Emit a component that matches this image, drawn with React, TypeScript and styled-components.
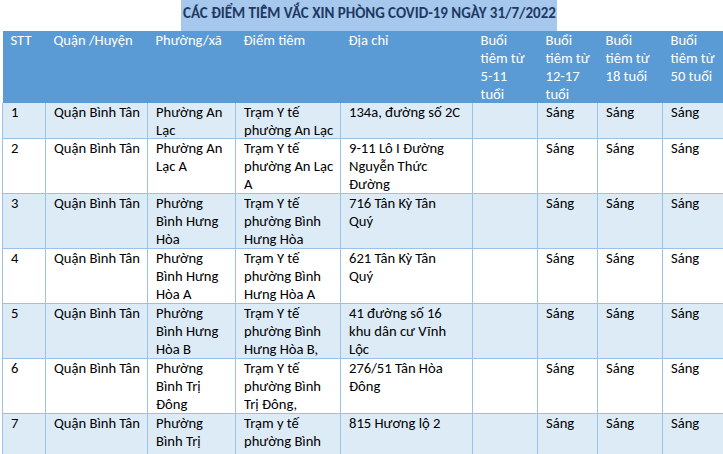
import React from 'react';
import styled, { createGlobalStyle } from 'styled-components';

type Row = {
  stt: string;
  district: string;
  ward: string[];
  site: string[];
  address: string[];
  s5: string;
  s12: string;
  s18: string;
  s50: string;
  height: number;
};

const rows: Row[] = [
  {
    stt: '1',
    district: 'Quận Bình Tân',
    ward: ['Phường An', 'Lạc'],
    site: ['Trạm Y tế', 'phường An Lạc'],
    address: ['134a, đường số 2C'],
    s5: '',
    s12: 'Sáng',
    s18: 'Sáng',
    s50: 'Sáng',
    height: 36,
  },
  {
    stt: '2',
    district: 'Quận Bình Tân',
    ward: ['Phường An', 'Lạc A'],
    site: ['Trạm Y tế', 'phường An Lạc', 'A'],
    address: ['9-11 Lô I Đường', 'Nguyễn Thức', 'Đường'],
    s5: '',
    s12: 'Sáng',
    s18: 'Sáng',
    s50: 'Sáng',
    height: 55,
  },
  {
    stt: '3',
    district: 'Quận Bình Tân',
    ward: ['Phường', 'Bình Hưng', 'Hòa'],
    site: ['Trạm Y tế', 'phường Bình', 'Hưng Hòa'],
    address: ['716 Tân Kỳ Tân', 'Quý'],
    s5: '',
    s12: 'Sáng',
    s18: 'Sáng',
    s50: 'Sáng',
    height: 55,
  },
  {
    stt: '4',
    district: 'Quận Bình Tân',
    ward: ['Phường', 'Bình Hưng', 'Hòa A'],
    site: ['Trạm Y tế', 'phường Bình', 'Hưng Hòa A'],
    address: ['621 Tân Kỳ Tân', 'Quý'],
    s5: '',
    s12: 'Sáng',
    s18: 'Sáng',
    s50: 'Sáng',
    height: 55,
  },
  {
    stt: '5',
    district: 'Quận Bình Tân',
    ward: ['Phường', 'Bình Hưng', 'Hòa B'],
    site: ['Trạm Y tế', 'phường Bình', 'Hưng Hòa B,'],
    address: ['41 đường số 16', 'khu dân cư Vĩnh', 'Lộc'],
    s5: '',
    s12: 'Sáng',
    s18: 'Sáng',
    s50: 'Sáng',
    height: 55,
  },
  {
    stt: '6',
    district: 'Quận Bình Tân',
    ward: ['Phường', 'Bình Trị', 'Đông'],
    site: ['Trạm Y tế', 'phường Bình', 'Trị Đông,'],
    address: ['276/51 Tân Hòa', 'Đông'],
    s5: '',
    s12: 'Sáng',
    s18: 'Sáng',
    s50: 'Sáng',
    height: 55,
  },
  {
    stt: '7',
    district: 'Quận Bình Tân',
    ward: ['Phường', 'Bình Trị', 'Đông A'],
    site: ['Trạm y tế', 'phường Bình', 'Trị Đông A'],
    address: ['815 Hương lộ 2'],
    s5: '',
    s12: 'Sáng',
    s18: 'Sáng',
    s50: 'Sáng',
    height: 55,
  },
];

const headers: string[][] = [
  ['STT'],
  ['Quận /Huyện'],
  ['Phường/xã'],
  ['Điểm tiêm'],
  ['Địa chỉ'],
  ['Buổi', 'tiêm từ', '5-11', 'tuổi'],
  ['Buổi', 'tiêm từ', '12-17', 'tuổi'],
  ['Buổi', 'tiêm  từ', '18 tuổi'],
  ['Buổi', 'tiêm từ', '50 tuổi'],
];

const widths = [43, 102, 88, 105, 132, 65, 60, 65, 65];

function Lines({ lines }: { lines: string[] }) {
  return (
    <>
      {lines.map((line, i) => (
        <Line key={i}>{line}</Line>
      ))}
    </>
  );
}

export default function App(): JSX.Element {
  return (
    <Page>
      <GlobalStyle />
      <TitleBar>CÁC ĐIỂM TIÊM VẮC XIN PHÒNG COVID-19 NGÀY 31/7/2022</TitleBar>
      <Sheet>
        <colgroup>
          {widths.map((w, i) => (
            <col key={i} style={{ width: w }} />
          ))}
        </colgroup>
        <thead>
          <tr>
            {headers.map((h, i) => (
              <HeadCell key={i}>
                <Lines lines={h} />
              </HeadCell>
            ))}
          </tr>
        </thead>
        <tbody>
          {rows.map((r, i) => {
            const cells: string[][] = [
              [r.stt],
              [r.district],
              r.ward,
              r.site,
              r.address,
              [r.s5],
              [r.s12],
              [r.s18],
              [r.s50],
            ];
            return (
              <BodyRow key={r.stt} striped={i % 2 === 0}>
                {cells.map((c, j) => (
                  <Cell key={j}>
                    <CellBody style={{ height: r.height - 1 }}>
                      <Lines lines={c} />
                    </CellBody>
                  </Cell>
                ))}
              </BodyRow>
            );
          })}
        </tbody>
      </Sheet>
    </Page>
  );
}

const GlobalStyle = createGlobalStyle`
  html, body {
    margin: 0;
    padding: 0;
    background: #ffffff;
    overflow: hidden;
  }
  body {
    font-family: Carlito, Lato, "Noto Sans", sans-serif;
    font-size: 14.6px;
    color: #000000;
  }
`;

const Page = styled.div`
  width: 723px;
  height: 454px;
  overflow: hidden;
  padding-left: 2px;
  box-sizing: border-box;
`;

const TitleBar = styled.div`
  margin-left: 179px;
  width: 376px;
  height: 31px;
  box-sizing: border-box;
  padding: 4px 0 0 2px;
  background: #a6c8ec;
  color: #1f3864;
  font-weight: 700;
  font-size: 15px;
  line-height: 18px;
  white-space: nowrap;
`;

const Sheet = styled.table`
  table-layout: fixed;
  width: 725px;
  border-collapse: collapse;
`;

const Line = styled.div`
  white-space: nowrap;
`;

const HeadCell = styled.th`
  background: #5b9bd5;
  color: #ffffff;
  font-weight: 400;
  text-align: left;
  vertical-align: top;
  padding: 0 0 0 8px;
  height: 72px;
  line-height: 18px;
  border: 0;
  box-sizing: border-box;
`;

const BodyRow = styled.tr<{ striped: boolean }>`
  background: ${(p) => (p.striped ? '#ddebf7' : '#ffffff')};
`;

const Cell = styled.td`
  border: 1px solid #9bc2e6;
  border-top: 0;
  text-align: left;
  vertical-align: top;
  padding: 0 0 0 8px;
  line-height: 18px;
  white-space: nowrap;
`;

const CellBody = styled.div`
  overflow: hidden;
`;
